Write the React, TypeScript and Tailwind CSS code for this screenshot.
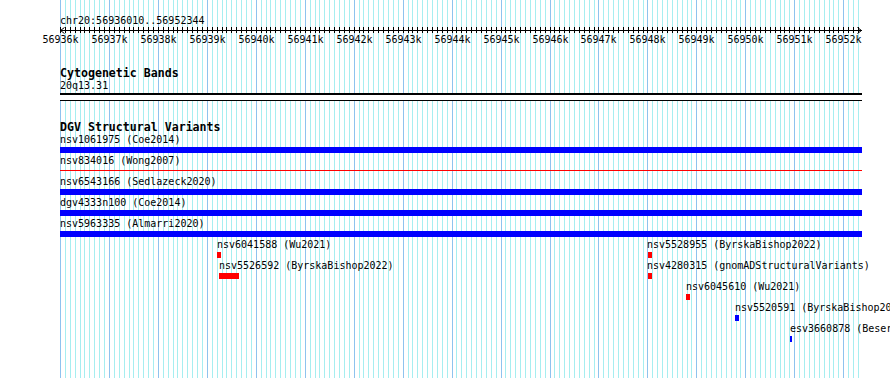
import React from "react";

const X0 = 60;
const PX_PER_100 = 4.895;
const minorXs = Array.from({ length: 164 }, (_, i) => ({
  x: Math.round(X0 + i * PX_PER_100),
  major: i % 10 === 0,
}));

const majors = Array.from({ length: 17 }, (_, i) => ({
  x: Math.round(X0 + i * 10 * PX_PER_100),
  label: `${56936 + i}k`,
}));

type Full = { label: string; kind: "bar" | "line" };
const fullRows: Full[] = [
  { label: "nsv1061975 (Coe2014)", kind: "bar" },
  { label: "nsv834016 (Wong2007)", kind: "line" },
  { label: "nsv6543166 (Sedlazeck2020)", kind: "bar" },
  { label: "dgv4333n100 (Coe2014)", kind: "bar" },
  { label: "nsv5963335 (Almarri2020)", kind: "bar" },
];

type Feat = { x: number; w: number; red: boolean; label: string; lx?: number };
const packed: Feat[][] = [
  [
    { x: 217, w: 4, red: true, label: "nsv6041588 (Wu2021)" },
    { x: 648, w: 4, red: true, label: "nsv5528955 (ByrskaBishop2022)", lx: 647 },
  ],
  [
    { x: 219, w: 20, red: true, label: "nsv5526592 (ByrskaBishop2022)" },
    { x: 648, w: 4, red: true, label: "nsv4280315 (gnomADStructuralVariants)", lx: 647 },
  ],
  [{ x: 686, w: 4, red: true, label: "nsv6045610 (Wu2021)" }],
  [{ x: 735, w: 4, red: false, label: "nsv5520591 (ByrskaBishop2022)" }],
  [{ x: 790, w: 2, red: false, label: "esv3660878 (Beser2023)" }],
];

function Grid() {
  return (
    <svg className="absolute left-0 top-0" width={890} height={378} shapeRendering="crispEdges">
      {minorXs.map((l, i) => (
        <rect key={i} x={l.x} y={0} width={1} height={378} fill={l.major ? "#8ec3ee" : "#a6eef0"} />
      ))}
    </svg>
  );
}

function Axis() {
  const w = 803;
  return (
    <svg width={w} height={7} shapeRendering="crispEdges" className="block">
      <rect x={0} y={3} width={802} height={1} fill="#000" />
      {minorXs.map((l, i) => (
        <rect key={i} x={l.x - X0} y={0} width={1} height={6} fill="#000" />
      ))}
      <path d="M0.5 3.5 L4.5 0.5 M0.5 3.5 L4.5 6.5" stroke="#000" strokeWidth={1} fill="none" shapeRendering="auto" />
      <path d="M801.5 3.5 L797.5 0.5 M801.5 3.5 L797.5 6.5" stroke="#000" strokeWidth={1} fill="none" shapeRendering="auto" />
    </svg>
  );
}

export default function App() {
  return (
    <div className="relative w-[890px] h-[378px] overflow-hidden bg-white text-black font-['DejaVu_Sans_Mono',monospace]">
      <Grid />
      <div className="relative flex flex-col pl-[60px]">
        <div className="h-[15px]" />
        <div className="h-[12px] text-[10px] leading-[12px] whitespace-nowrap">chr20:56936010..56952344</div>
        <Axis />
        <div className="relative h-[12px] text-[10px] leading-[12px]">
          {majors.map((m) => (
            <span
              key={m.label}
              className="absolute top-0 -translate-x-1/2 whitespace-nowrap"
              style={{ left: m.x - X0 + 0.5 }}
            >
              {m.label}
            </span>
          ))}
        </div>
        <div className="h-[20px]" />
        <div className="h-[14px] text-[11.6px] leading-[14px] font-bold whitespace-nowrap">Cytogenetic Bands</div>
        <div className="h-[12px] text-[10px] leading-[12px] whitespace-nowrap">20q13.31</div>
        <div className="mt-[1px] w-[802px] h-[8px] bg-white border-t-2 border-b border-black" />
        <div className="h-[19px]" />
        <div className="h-[14px] text-[11.6px] leading-[14px] font-bold whitespace-nowrap">DGV Structural Variants</div>
        {fullRows.map((r) => (
          <div key={r.label} className="h-[21px] flex flex-col">
            <div className="h-[12px] text-[10px] leading-[12px] whitespace-nowrap">{r.label}</div>
            <div className="mt-[1px] h-[6px] w-[802px] flex flex-col">
              {r.kind === "bar" ? (
                <div className="h-[6px] bg-[#0000ff]" />
              ) : (
                <div className="mt-[2px] h-[1px] bg-[#ff0000]" />
              )}
            </div>
          </div>
        ))}
        {packed.map((row, ri) => (
          <div key={ri} className="relative h-[21px]">
            {row.map((f) => (
              <div key={f.label} className="absolute top-0 flex flex-col" style={{ left: (f.lx ?? f.x) - X0 }}>
                <div className="h-[12px] text-[10px] leading-[12px] whitespace-nowrap">{f.label}</div>
                <div
                  className={`mt-[1px] h-[6px] ${f.red ? "bg-[#ff0000]" : "bg-[#0000ff]"}`}
                  style={{ width: f.w, marginLeft: f.x - (f.lx ?? f.x) }}
                />
              </div>
            ))}
          </div>
        ))}
      </div>
    </div>
  );
}
